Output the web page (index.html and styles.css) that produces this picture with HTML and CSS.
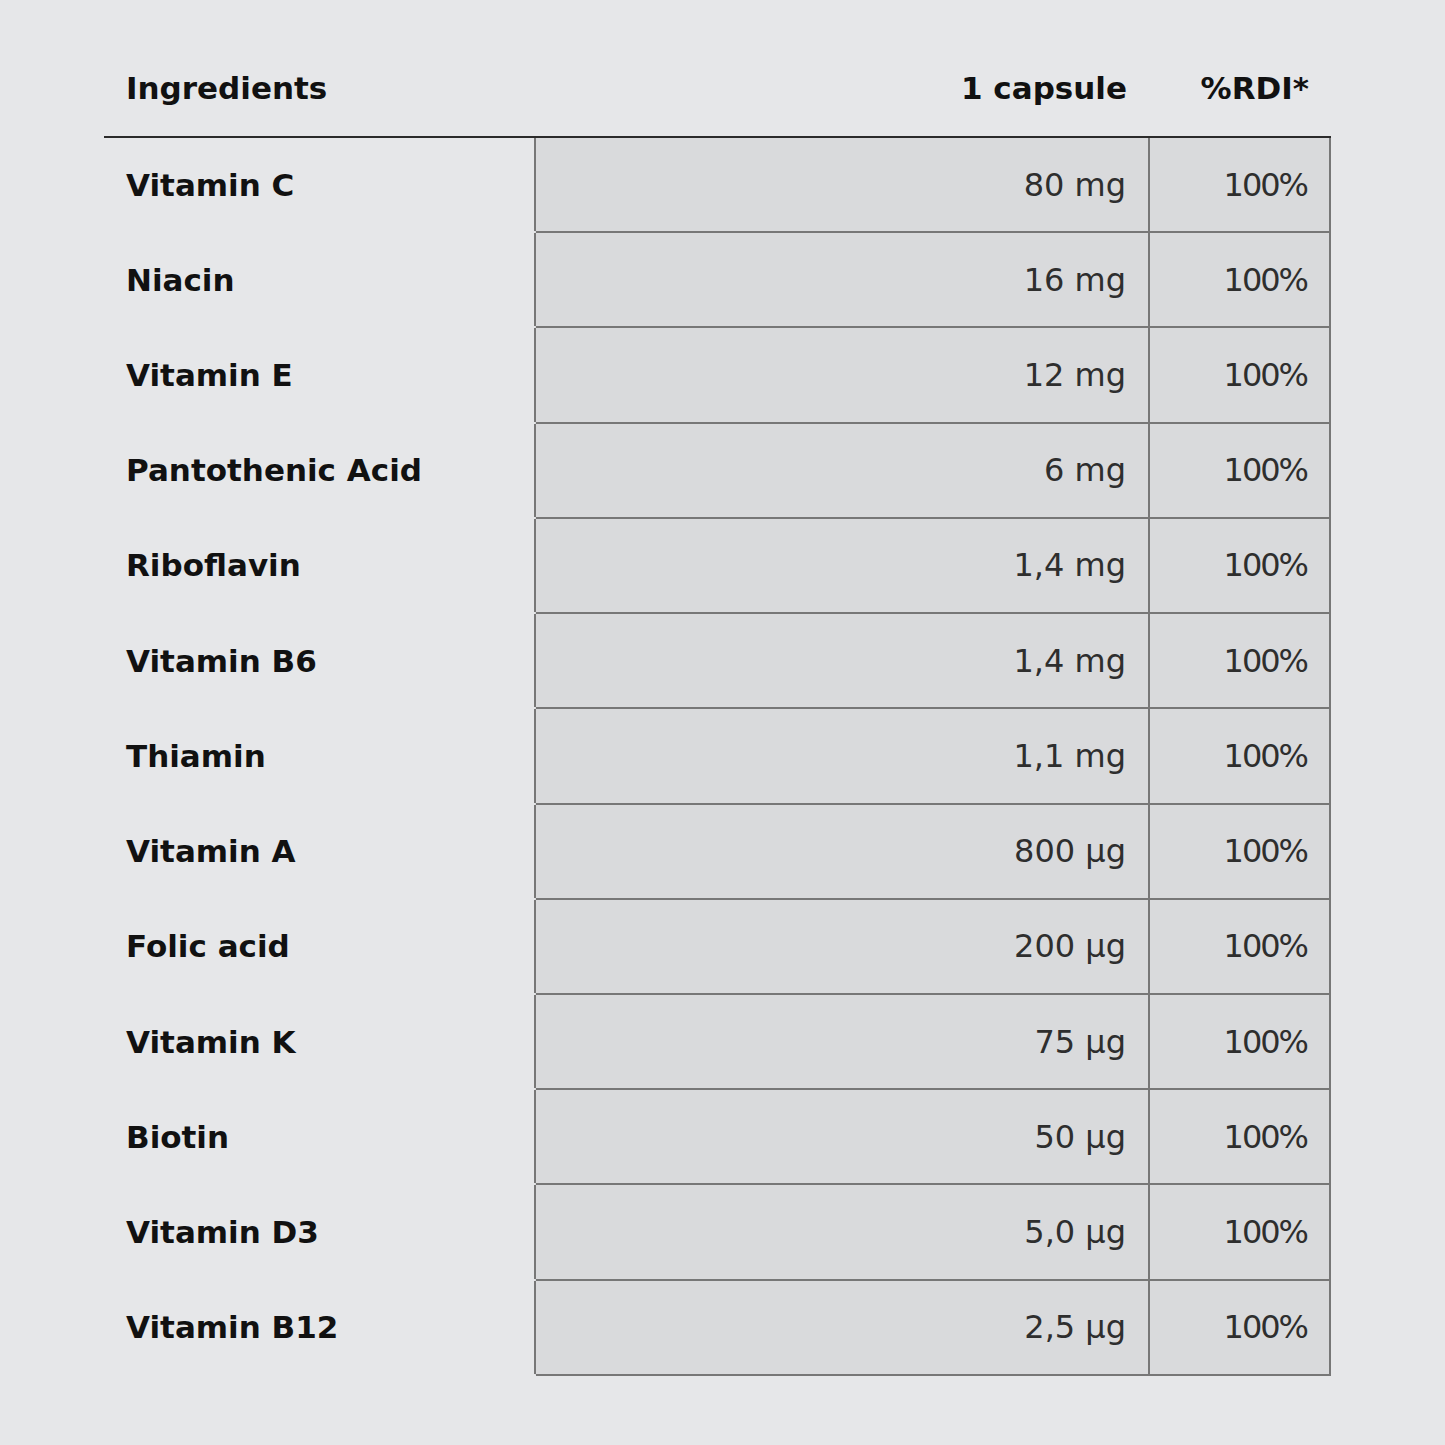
FILE: index.html
```html
<!DOCTYPE html>
<html lang="en">
<head>
<meta charset="utf-8">
<title>Ingredients</title>
<link rel="stylesheet" href="styles.css">
</head>
<body>
<main class="page">
  <table class="facts">
    <colgroup>
      <col class="col-name">
      <col class="col-amount">
      <col class="col-rdi">
    </colgroup>
    <thead>
      <tr>
        <th class="name">Ingredients</th>
        <th class="amount">1 capsule</th>
        <th class="rdi">%RDI*</th>
      </tr>
    </thead>
    <tbody>
      <tr><td class="name">Vitamin C</td><td class="amount">80 mg</td><td class="rdi">100%</td></tr>
      <tr><td class="name">Niacin</td><td class="amount">16 mg</td><td class="rdi">100%</td></tr>
      <tr><td class="name">Vitamin E</td><td class="amount">12 mg</td><td class="rdi">100%</td></tr>
      <tr><td class="name">Pantothenic Acid</td><td class="amount">6 mg</td><td class="rdi">100%</td></tr>
      <tr><td class="name">Riboflavin</td><td class="amount">1,4 mg</td><td class="rdi">100%</td></tr>
      <tr><td class="name">Vitamin B6</td><td class="amount">1,4 mg</td><td class="rdi">100%</td></tr>
      <tr><td class="name">Thiamin</td><td class="amount">1,1 mg</td><td class="rdi">100%</td></tr>
      <tr><td class="name">Vitamin A</td><td class="amount">800 µg</td><td class="rdi">100%</td></tr>
      <tr><td class="name">Folic acid</td><td class="amount">200 µg</td><td class="rdi">100%</td></tr>
      <tr><td class="name">Vitamin K</td><td class="amount">75 µg</td><td class="rdi">100%</td></tr>
      <tr><td class="name">Biotin</td><td class="amount">50 µg</td><td class="rdi">100%</td></tr>
      <tr><td class="name">Vitamin D3</td><td class="amount">5,0 µg</td><td class="rdi">100%</td></tr>
      <tr><td class="name">Vitamin B12</td><td class="amount">2,5 µg</td><td class="rdi">100%</td></tr>
    </tbody>
  </table>
</main>
</body>
</html>
```

FILE: styles.css
```css
html, body {
  margin: 0;
  padding: 0;
  background: #e6e7e9;
}

body {
  font-family: "DejaVu Sans", "Liberation Sans", sans-serif;
  color: #111;
}

.page {
  padding: 42px 0 0 104px;
}

.facts {
  width: 1226px;
  border-collapse: collapse;
  table-layout: fixed;
}

.col-name { width: 431px; }
.col-amount { width: 614px; }
.col-rdi { width: 181px; }

.facts th {
  height: 92px;
  padding: 0 0 2px;
  font-size: 31px;
  font-weight: 700;
  color: #111;
  vertical-align: middle;
  border-bottom: 2px solid #2b2b2b;
}

.facts th.name {
  text-align: left;
  padding-left: 22px;
}

.facts th.amount {
  text-align: right;
  padding-right: 22px;
}

.facts th.rdi {
  text-align: right;
  padding-right: 21px;
}

.facts td {
  height: 93.23px;
  padding: 0;
  vertical-align: middle;
}

.facts td.name {
  font-size: 31px;
  font-weight: 700;
  color: #111;
  padding-left: 22px;
  border-bottom: 2px solid transparent;
}

.facts td.amount,
.facts td.rdi {
  background: #d9dadc;
  border: 2px solid #777;
  color: #2e2e2e;
  font-size: 32px;
  font-weight: 400;
  text-align: right;
}

.facts td.amount {
  padding-right: 22px;
}

.facts td.rdi {
  padding-right: 22px;
  letter-spacing: -2px;
}
```
